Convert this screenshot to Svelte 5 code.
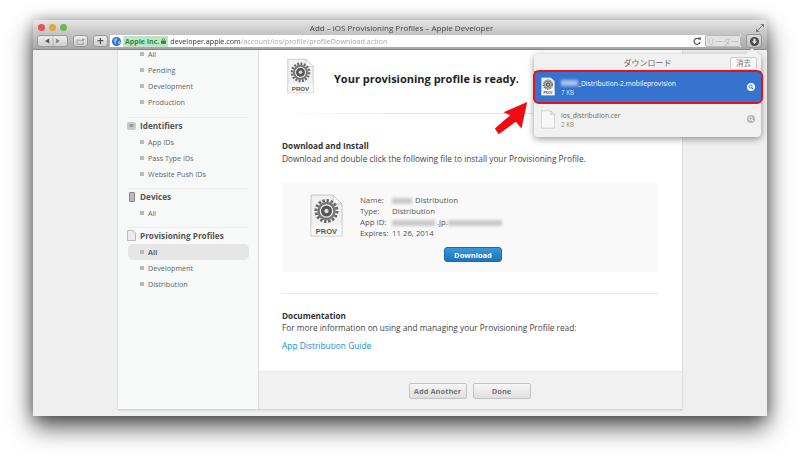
<script>
	const firstGroup = ['All', 'Pending', 'Development', 'Production'];
	const groups = [
		{ title: 'Identifiers', icon: 'id', items: ['App IDs', 'Pass Type IDs', 'Website Push IDs'] },
		{ title: 'Devices', icon: 'device', items: ['All'] },
		{ title: 'Provisioning Profiles', icon: 'doc', items: ['All', 'Development', 'Distribution'] }
	];
</script>

{#snippet provIcon(cls)}
	<svg class={cls} viewBox="0 0 33 43" aria-hidden="true">
		<path d="M1 1H23L32 10V42H1Z" fill="#f1f1f1" stroke="#c4c4c4" />
		<path d="M23 1V10H32Z" fill="#fbfbfb" stroke="#c4c4c4" />
		<circle cx="16.5" cy="17" r="10.5" fill="none" stroke="#666" stroke-width="3" stroke-dasharray="2.4 1.7" />
		<circle cx="16.5" cy="17" r="8" fill="none" stroke="#777" stroke-width="2.5" />
		<circle cx="16.5" cy="17" r="5.5" fill="#555" />
		<circle cx="16.5" cy="17" r="2.2" fill="#ddd" />
		<rect x="1.5" y="31" width="30" height="10.5" fill="#fafafa" />
		<text x="16.5" y="39.5" text-anchor="middle" font-size="7.5" font-weight="700" fill="#555" font-family="'Liberation Sans', sans-serif">PROV</text>
	</svg>
{/snippet}

{#snippet magnifier(cls)}
	<svg class={cls} viewBox="0 0 10 10" aria-hidden="true">
		<circle cx="5" cy="5" r="5" fill="currentColor" />
		<circle cx="4.4" cy="4.4" r="2" fill="none" stroke="var(--lens)" stroke-width="1.2" />
		<path d="M6 6L8 8" stroke="var(--lens)" stroke-width="1.4" />
	</svg>
{/snippet}

<div class="window">
	<header class="chrome">
		<div class="titlebar">
			<span class="light red"></span>
			<span class="light amber"></span>
			<span class="light green"></span>
			<span class="title">Add – iOS Provisioning Profiles – Apple Developer</span>
			<svg class="expand" viewBox="0 0 9 9" aria-hidden="true">
				<path d="M5 0H9V4ZM0 9V5L4 9Z" fill="#777" />
				<path d="M7 2L2 7" stroke="#777" />
			</svg>
		</div>
		<div class="toolbar">
			<div class="tool nav">
				<svg viewBox="0 0 28 12" aria-hidden="true">
					<path d="M5 6L10 3V9Z" fill="#555" />
					<path d="M14.5 0V12" stroke="#aaa" />
					<path d="M23 6L18 3V9Z" fill="#888" />
				</svg>
			</div>
			<div class="tool share">
				<svg viewBox="0 0 16 12" aria-hidden="true">
					<path d="M3 4H7M12 7V10H3V4" fill="none" stroke="#888" />
					<path d="M7 6C8 4 9 3 11 3V1L14 3.5L11 6V4.5C9 4.5 8 5 7 6Z" fill="#888" />
				</svg>
			</div>
			<div class="tool plus">+</div>
			<div class="address">
				<svg class="globe" viewBox="0 0 10 10" aria-hidden="true">
					<circle cx="5" cy="5" r="5" fill="#2f75c9" />
					<path d="M2 3L5 1L6 3L4 5L5 8L3 7ZM7 5L9 4V7L7 8Z" fill="#9cc7ea" />
				</svg>
				<span class="identity">Apple Inc.<svg class="lock" viewBox="0 0 6 7" aria-hidden="true"><path d="M0 3H6V7H0Z" fill="#2c8a4e" /><path d="M1.5 3V2A1.5 1.5 0 0 1 4.500 2V3" fill="none" stroke="#2c8a4e" /></svg></span>
				<span class="host">developer.apple.com</span><span class="path">/account/ios/profile/profileDownload.action</span>
				<svg class="reload" viewBox="0 0 8 8" aria-hidden="true">
					<path d="M6.500 2.500A3 3 0 1 0 7 5" fill="none" stroke="#555" stroke-width="1.200" />
					<path d="M5 0.500L8 0.500L7.500 3.500Z" fill="#555" />
				</svg>
				<span class="reader">リーダー</span>
			</div>
			<div class="tool downloads">
				<svg viewBox="0 0 10 10" aria-hidden="true">
					<circle cx="5" cy="5" r="5" fill="#4a4a4a" />
					<path d="M3.800 2H6.200V4.800H7.800L5 8L2.200 4.800H3.800Z" fill="#e6e6e6" />
				</svg>
			</div>
		</div>
	</header>

	<div class="viewport">
		<div class="card">
			<aside class="sidebar">
				<ul class="group first">
					{#each firstGroup as item}
						<li><i></i>{item}</li>
					{/each}
				</ul>
				{#each groups as group}
					<div class="group">
						<h4>
							{#if group.icon === 'id'}
								<span class="badge-id">ID</span>
							{:else if group.icon === 'device'}
								<span class="badge-device"></span>
							{:else}
								<svg class="badge-doc" viewBox="0 0 9 11" aria-hidden="true"><path d="M0.500 0.500H6L8.500 3V10.500H0.500Z" fill="#ececec" stroke="#bbb" /></svg>
							{/if}
							{group.title}
						</h4>
						<ul>
							{#each group.items as item}
								<li class:active={group.icon === 'doc' && item === 'All'}><i></i>{item}</li>
							{/each}
						</ul>
					</div>
				{/each}
			</aside>

			<main class="content">
				<section class="ready">
					{@render provIcon('prov-small')}
					<h2>Your provisioning profile is ready.</h2>
				</section>
				<div class="rule fade"></div>

				<section class="install">
					<h3>Download and Install</h3>
					<p>Download and double click the following file to install your Provisioning Profile.</p>
					<div class="panel">
						{@render provIcon('prov-large')}
						<dl>
							<dt>Name:</dt><dd><span class="smudge s1"></span>Distribution</dd>
							<dt>Type:</dt><dd>Distribution</dd>
							<dt>App ID:</dt><dd><span class="smudge s2"></span>.jp.<span class="smudge s3"></span></dd>
							<dt>Expires:</dt><dd>11 26, 2014</dd>
						</dl>
						<button class="download">Download</button>
					</div>
				</section>
				<div class="rule"></div>

				<section class="docs">
					<h3>Documentation</h3>
					<p>For more information on using and managing your Provisioning Profile read:</p>
					<span class="link">App Distribution Guide</span>
				</section>

				<footer class="actions">
					<button>Add Another</button>
					<button>Done</button>
				</footer>
			</main>
		</div>
	</div>

	<!-- download popover, sits over the page -->
	<div class="popover">
		<span class="caret"></span>
		<div class="pop-head">
			<span class="pop-title">ダウンロード</span>
			<span class="clear">消去</span>
		</div>
		<div class="dl-row selected">
			{@render provIcon('dl-icon')}
			<div class="dl-text">
				<div class="dl-name"><span class="smudge s4"></span>_Distribution-2.mobileprovision</div>
				<div class="dl-size">7 KB</div>
			</div>
			{@render magnifier('glass')}
		</div>
		<div class="dl-row">
			<svg class="dl-icon" viewBox="0 0 33 43" aria-hidden="true">
				<path d="M1 1H23L32 10V42H1Z" fill="#f8f8f8" stroke="#bbb" stroke-width="1.500" />
				<path d="M23 1V10H32Z" fill="#eee" stroke="#bbb" stroke-width="1.500" />
			</svg>
			<div class="dl-text">
				<div class="dl-name">ios_distribution.cer</div>
				<div class="dl-size">2 KB</div>
			</div>
			{@render magnifier('glass')}
		</div>
	</div>

	<!-- red annotation drawn over the screenshot -->
	<div class="highlight"></div>
	<svg class="arrow" viewBox="0 0 40 40" aria-hidden="true">
		<path d="M36 2L30 30L24 23L6 36L2 30L18 16L11 13Z" fill="#ee0b12" />
	</svg>
</div>

<style>
	:global(body) {
		background: #fff;
	}
	ul {
		list-style: none;
		margin: 0;
		padding: 0;
	}
	.window {
		position: relative;
		width: 734px;
		height: 396px;
		margin: 20px 33px 46px;
		display: flex;
		flex-direction: column;
		border-radius: 4px 4px 0 0;
		box-shadow: 0 11px 24px rgba(0, 0, 0, 0.68), 0 0 14px rgba(0, 0, 0, 0.3);
		font-family: 'Open Sans', 'Noto Sans CJK JP', sans-serif;
		font-size: 8px;
		color: #555;
		filter: blur(0.35px);
	}
	.chrome {
		height: 30px;
		flex: none;
		background: linear-gradient(#e6e6e6, #c9c9c9 40%, #a9a9a9);
		border-bottom: 1px solid #8a8a8a;
		border-radius: 4px 4px 0 0;
		box-sizing: border-box;
	}
	.titlebar {
		position: relative;
		height: 14px;
		display: flex;
		align-items: center;
		gap: 4px;
		padding: 1px 0 0 5px;
		box-sizing: border-box;
	}
	.light {
		width: 7px;
		height: 7px;
		border-radius: 50%;
	}
	.red { background: #e0564f; }
	.amber { background: #e0a83c; }
	.green { background: #6cb84f; }
	.title {
		flex: 1;
		margin-right: 20px;
		text-align: center;
		font-size: 8px;
		color: #444;
	}
	.expand {
		width: 8px;
		height: 8px;
		margin-right: 3px;
	}
	.toolbar {
		display: flex;
		align-items: center;
		height: 14px;
		padding: 0 5px 0 4px;
		gap: 5px;
	}
	.tool {
		height: 12px;
		box-sizing: border-box;
		display: flex;
		align-items: center;
		justify-content: center;
		background: linear-gradient(#ececec, #cfcfcf);
		border: 1px solid #999;
		border-radius: 3px;
	}
	.nav { width: 31px; }
	.nav svg { width: 27px; height: 10px; }
	.share { width: 15px; }
	.share svg { width: 11px; height: 9px; }
	.plus {
		width: 15px;
		font-size: 12px;
		font-weight: 700;
		color: #555;
		line-height: 10px;
	}
	.address {
		flex: 1;
		height: 12px;
		background: #fff;
		display: flex;
		align-items: center;
		padding-left: 2px;
		min-width: 0;
		margin-left: -3px;
	}
	.globe {
		width: 9px;
		height: 9px;
		margin-right: 2px;
		flex: none;
	}
	.identity {
		background: #bfe4c8;
		color: #2c8a4e;
		font-size: 7px;
		font-weight: 700;
		padding: 0 2px;
		height: 11px;
		line-height: 11px;
		margin-right: 2px;
		white-space: nowrap;
	}
	.lock {
		width: 5px;
		height: 6px;
		margin-left: 2px;
	}
	.host {
		color: #333;
		font-size: 7.200px;
	}
	.path {
		color: #a9a9a9;
		font-size: 7.200px;
		flex: 1;
		white-space: nowrap;
	}
	.reload {
		width: 8px;
		height: 8px;
		margin-right: 4px;
		flex: none;
	}
	.reader {
		width: 36px;
		height: 12px;
		box-sizing: border-box;
		text-align: center;
		line-height: 11px;
		font-size: 8px;
		color: #bbb;
		background: #e2e2e2;
		border: 1px solid #bbb;
		border-radius: 2px;
		flex: none;
	}
	.downloads {
		width: 16px;
		height: 14px;
		background: linear-gradient(#dcdcdc, #bcbcbc);
	}
	.downloads svg { width: 9px; height: 9px; }

	.viewport {
		flex: 1;
		min-height: 0;
		background: #efefef;
		padding: 0 85px 6px;
		display: flex;
	}
	.card {
		flex: 1;
		display: flex;
		overflow: hidden;
		border-bottom: 1px solid #d6d6d6;
		box-shadow: 0 0 2px rgba(0, 0, 0, 0.2);
	}
	.sidebar {
		width: 141px;
		flex: none;
		box-sizing: border-box;
		background: #f7f9f8;
		border-right: 1px solid #dcdcdc;
		padding: 0 9px;
	}
	.group {
		border-top: 1px solid #ececec;
		padding-bottom: 6px;
	}
	.group.first {
		border-top: none;
		margin-top: -4.500px;
		padding-bottom: 7px;
	}
	.group h4 {
		margin: 0;
		height: 16px;
		display: flex;
		align-items: center;
		gap: 4px;
		font-size: 8.200px;
		font-weight: 700;
		color: #555;
	}
	.badge-id {
		width: 9px;
		height: 8px;
		background: #c9c9c9;
		border-radius: 2px;
		font-size: 4px;
		text-align: center;
		line-height: 8px;
		color: #777;
	}
	.badge-device {
		width: 6px;
		height: 10px;
		margin: 0 1px 0 2px;
		background: #bbb;
		border: 1px solid #888;
		box-sizing: border-box;
		border-radius: 1px;
	}
	.badge-doc {
		width: 9px;
		height: 11px;
	}
	li {
		height: 16px;
		line-height: 16px;
		padding-left: 13px;
		font-size: 7.200px;
		color: #666;
		display: flex;
		align-items: center;
		gap: 4px;
		white-space: nowrap;
	}
	li i {
		width: 4px;
		height: 4px;
		background: #b9b9b9;
		flex: none;
	}
	li.active {
		background: #e6e6e6;
		border-radius: 5px;
		margin-left: 1px;
		padding-left: 12px;
		font-weight: 700;
	}

	.content {
		flex: 1;
		min-width: 0;
		background: #fff;
		display: flex;
		flex-direction: column;
	}
	.ready {
		display: flex;
		align-items: flex-start;
		padding: 8px 0 0 28px;
		gap: 20px;
		height: 46px;
	}
	.prov-small {
		width: 27px;
		height: 36px;
	}
	.prov-large {
		width: 33px;
		height: 43px;
		flex: none;
	}
	h2 {
		margin: 13px 0 0;
		font-size: 11px;
		line-height: 15px;
		font-weight: 700;
		color: #222;
	}
	.rule {
		height: 1px;
		margin: 0 24px 0 23px;
		background: #e9e9e9;
		flex: none;
	}
	.rule.fade {
		margin-top: 9px;
		background: linear-gradient(90deg, #fff, #e5e5e5 30%, #e5e5e5 70%, #fff);
	}
	h3 {
		margin: 0 0 1px;
		font-size: 8.200px;
		font-weight: 700;
		color: #333;
		line-height: 12px;
	}
	.install p,
	.docs p {
		margin: 0;
		font-size: 8.300px;
		line-height: 12px;
		color: #444;
	}
	.install {
		padding: 26px 24px 21px 23px;
	}
	.panel {
		position: relative;
		margin-top: 18px;
		height: 89px;
		background: #f9f9f9;
		display: flex;
		padding: 11px 0 0 28px;
		box-sizing: border-box;
		gap: 17px;
	}
	dl {
		margin: 1px 0 0;
		display: grid;
		grid-template-columns: 32px auto;
		grid-auto-rows: 11px;
		align-self: start;
		font-size: 7.800px;
		line-height: 11px;
		color: #555;
	}
	dt, dd { margin: 0; white-space: nowrap; }
	.smudge {
		display: inline-block;
		height: 6px;
		background: #c9c9c9;
		filter: blur(1.500px);
		vertical-align: -0.500px;
	}
	.s1 { width: 20px; margin-right: 3px; }
	.s2 { width: 43px; margin-right: 2px; }
	.s3 { width: 54px; }
	.s4 { width: 17px; background: #a9c3ea; }
	.download {
		position: absolute;
		left: 162px;
		top: 64px;
		width: 58px;
		height: 15px;
		padding: 0;
		border: 1px solid #1a6cae;
		border-radius: 3px;
		background: linear-gradient(#3a97dc, #1c74bb);
		color: #fff;
		font: 700 7.500px 'Open Sans', sans-serif;
	}
	.docs {
		padding: 16px 24px 0 23px;
		flex: 1;
	}
	.docs p { margin-top: -1px; }
	.link {
		display: block;
		margin-top: 6px;
		font-size: 8.400px;
		line-height: 12px;
		color: #0f8fcf;
	}
	.actions {
		flex: none;
		height: 38px;
		background: #f1f1f1;
		border-top: 1px solid #e8e8e8;
		display: flex;
		justify-content: center;
		gap: 6px;
		padding: 11px 2px 0 0;
		box-sizing: border-box;
	}
	.actions button {
		width: 58px;
		height: 16px;
		padding: 0;
		border: 1px solid #c4c4c4;
		border-radius: 2px;
		background: linear-gradient(#f7f7f7, #dfdfdf);
		color: #777;
		font: 700 7.500px 'Open Sans', sans-serif;
	}

	.popover {
		position: absolute;
		left: 501px;
		top: 34px;
		width: 227px;
		height: 83px;
		background: #f1f1f1;
		border-radius: 4px;
		box-shadow: 0 2px 7px rgba(0, 0, 0, 0.4);
	}
	.caret {
		position: absolute;
		right: 5px;
		top: -4px;
		width: 8px;
		height: 8px;
		background: #f1f1f1;
		transform: rotate(45deg);
	}
	.pop-head {
		position: relative;
		height: 17px;
		display: flex;
		align-items: center;
		justify-content: center;
	}
	.pop-title {
		font-size: 8px;
		color: #666;
	}
	.clear {
		position: absolute;
		right: 4px;
		top: 3px;
		width: 27px;
		height: 13px;
		box-sizing: border-box;
		border: 1px solid #ccc;
		border-radius: 2px;
		background: #f9f9f9;
		font-size: 7.500px;
		line-height: 11px;
		text-align: center;
		color: #777;
	}
	.dl-row {
		height: 32px;
		display: flex;
		align-items: center;
		padding: 0 6px 0 7px;
		gap: 6px;
		--lens: #f1f1f1;
		color: #b5b5b5;
	}
	.dl-row.selected {
		background: #3573cf;
		color: #fff;
		--lens: #3573cf;
		height: 31px;
		margin-bottom: 1px;
	}
	:global(.dl-icon) {
		width: 14px;
		height: 19px;
		flex: none;
	}
	.dl-text {
		flex: 1;
		margin-top: 2px;
	}
	.dl-name {
		font-size: 6.700px;
		line-height: 9px;
		color: #666;
	}
	.dl-size {
		font-size: 6.200px;
		line-height: 9px;
		color: #888;
	}
	.selected .dl-name { color: #fff; }
	.selected .dl-size { color: #dbe6f7; }
	:global(.glass) {
		width: 8px;
		height: 8px;
		flex: none;
	}
	.highlight {
		position: absolute;
		left: 500px;
		top: 50px;
		width: 230px;
		height: 34px;
		box-sizing: border-box;
		border: 2.500px solid #e8101a;
		border-radius: 6px;
	}
	.arrow {
		position: absolute;
		left: 460px;
		top: 80px;
		width: 38px;
		height: 38px;
	}
</style>
